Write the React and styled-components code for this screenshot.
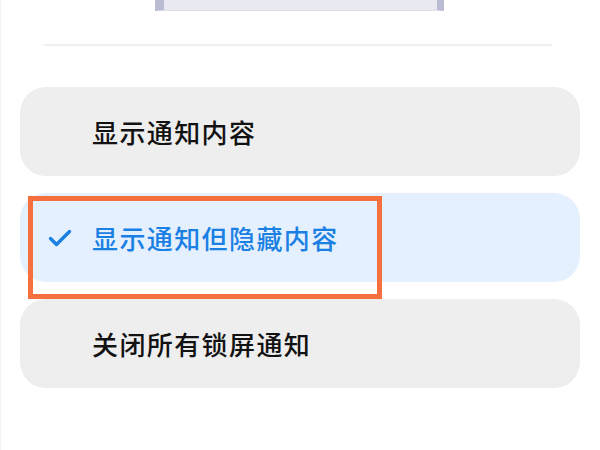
import styled, { createGlobalStyle } from "styled-components";

const Global = createGlobalStyle`
  html, body {
    margin: 0;
    padding: 0;
    background: #ffffff;
  }
  body {
    font-family: "Noto Sans CJK SC", "Noto Sans", sans-serif;
  }
`;

const Page = styled.div`
  width: 600px;
  height: 450px;
  overflow: hidden;
  border-left: 1px solid #f2f2f2;
  box-sizing: border-box;
  display: flex;
  flex-direction: column;
  align-items: flex-start;
`;

const Preview = styled.div`
  width: 289px;
  height: 11px;
  margin-left: 154px;
  box-sizing: border-box;
  background: #e9eaf1;
  border-left: 9px solid #b9bcd3;
  border-right: 7px solid #b9bcd3;
  border-bottom: 1px solid #dfe0ea;
`;

const Divider = styled.div`
  width: 508px;
  height: 2px;
  margin-top: 33px;
  margin-left: 43px;
  background: #efefef;
`;

const List = styled.div`
  width: 560px;
  margin-top: 41px;
  margin-left: 19px;
  display: flex;
  flex-direction: column;
  gap: 17px;
`;

const Option = styled.div`
  position: relative;
  height: 89px;
  border-radius: 26px;
  background: ${({ selected }) => (selected ? "#e4f0fd" : "#eeeeee")};
  display: flex;
  align-items: center;
  padding-left: 28px;
  box-sizing: border-box;
`;

const Check = styled.div`
  width: 44px;
  height: 24px;
  display: flex;
  align-items: center;
`;

const Label = styled.span`
  font-size: 26px;
  font-weight: 500;
  letter-spacing: 1.4px;
  color: ${({ selected }) => (selected ? "#1b80e4" : "#121212")};
`;

const Highlight = styled.div`
  position: absolute;
  left: 8px;
  top: 3px;
  width: 354px;
  height: 103px;
  box-sizing: border-box;
  border: 5px solid #f6703f;
  pointer-events: none;
`;

const options = [
  { text: "显示通知内容" },
  { text: "显示通知但隐藏内容", selected: true },
  { text: "关闭所有锁屏通知" },
];

export default function App() {
  return (
    <>
      <Global />
      <Page>
        <Preview />
        <Divider />
        <List>
          {options.map((o) => (
            <Option key={o.text} selected={o.selected}>
              <Check>
                {o.selected && (
                  <svg width="24" height="18" viewBox="0 0 24 18">
                    <polyline
                      points="2.5,9.5 8.5,15.5 21.5,2.5"
                      fill="none"
                      stroke="#1b80e4"
                      strokeWidth="3.4"
                      strokeLinecap="round"
                      strokeLinejoin="round"
                    />
                  </svg>
                )}
              </Check>
              <Label selected={o.selected}>{o.text}</Label>
              {o.selected && <Highlight />}
            </Option>
          ))}
        </List>
      </Page>
    </>
  );
}
